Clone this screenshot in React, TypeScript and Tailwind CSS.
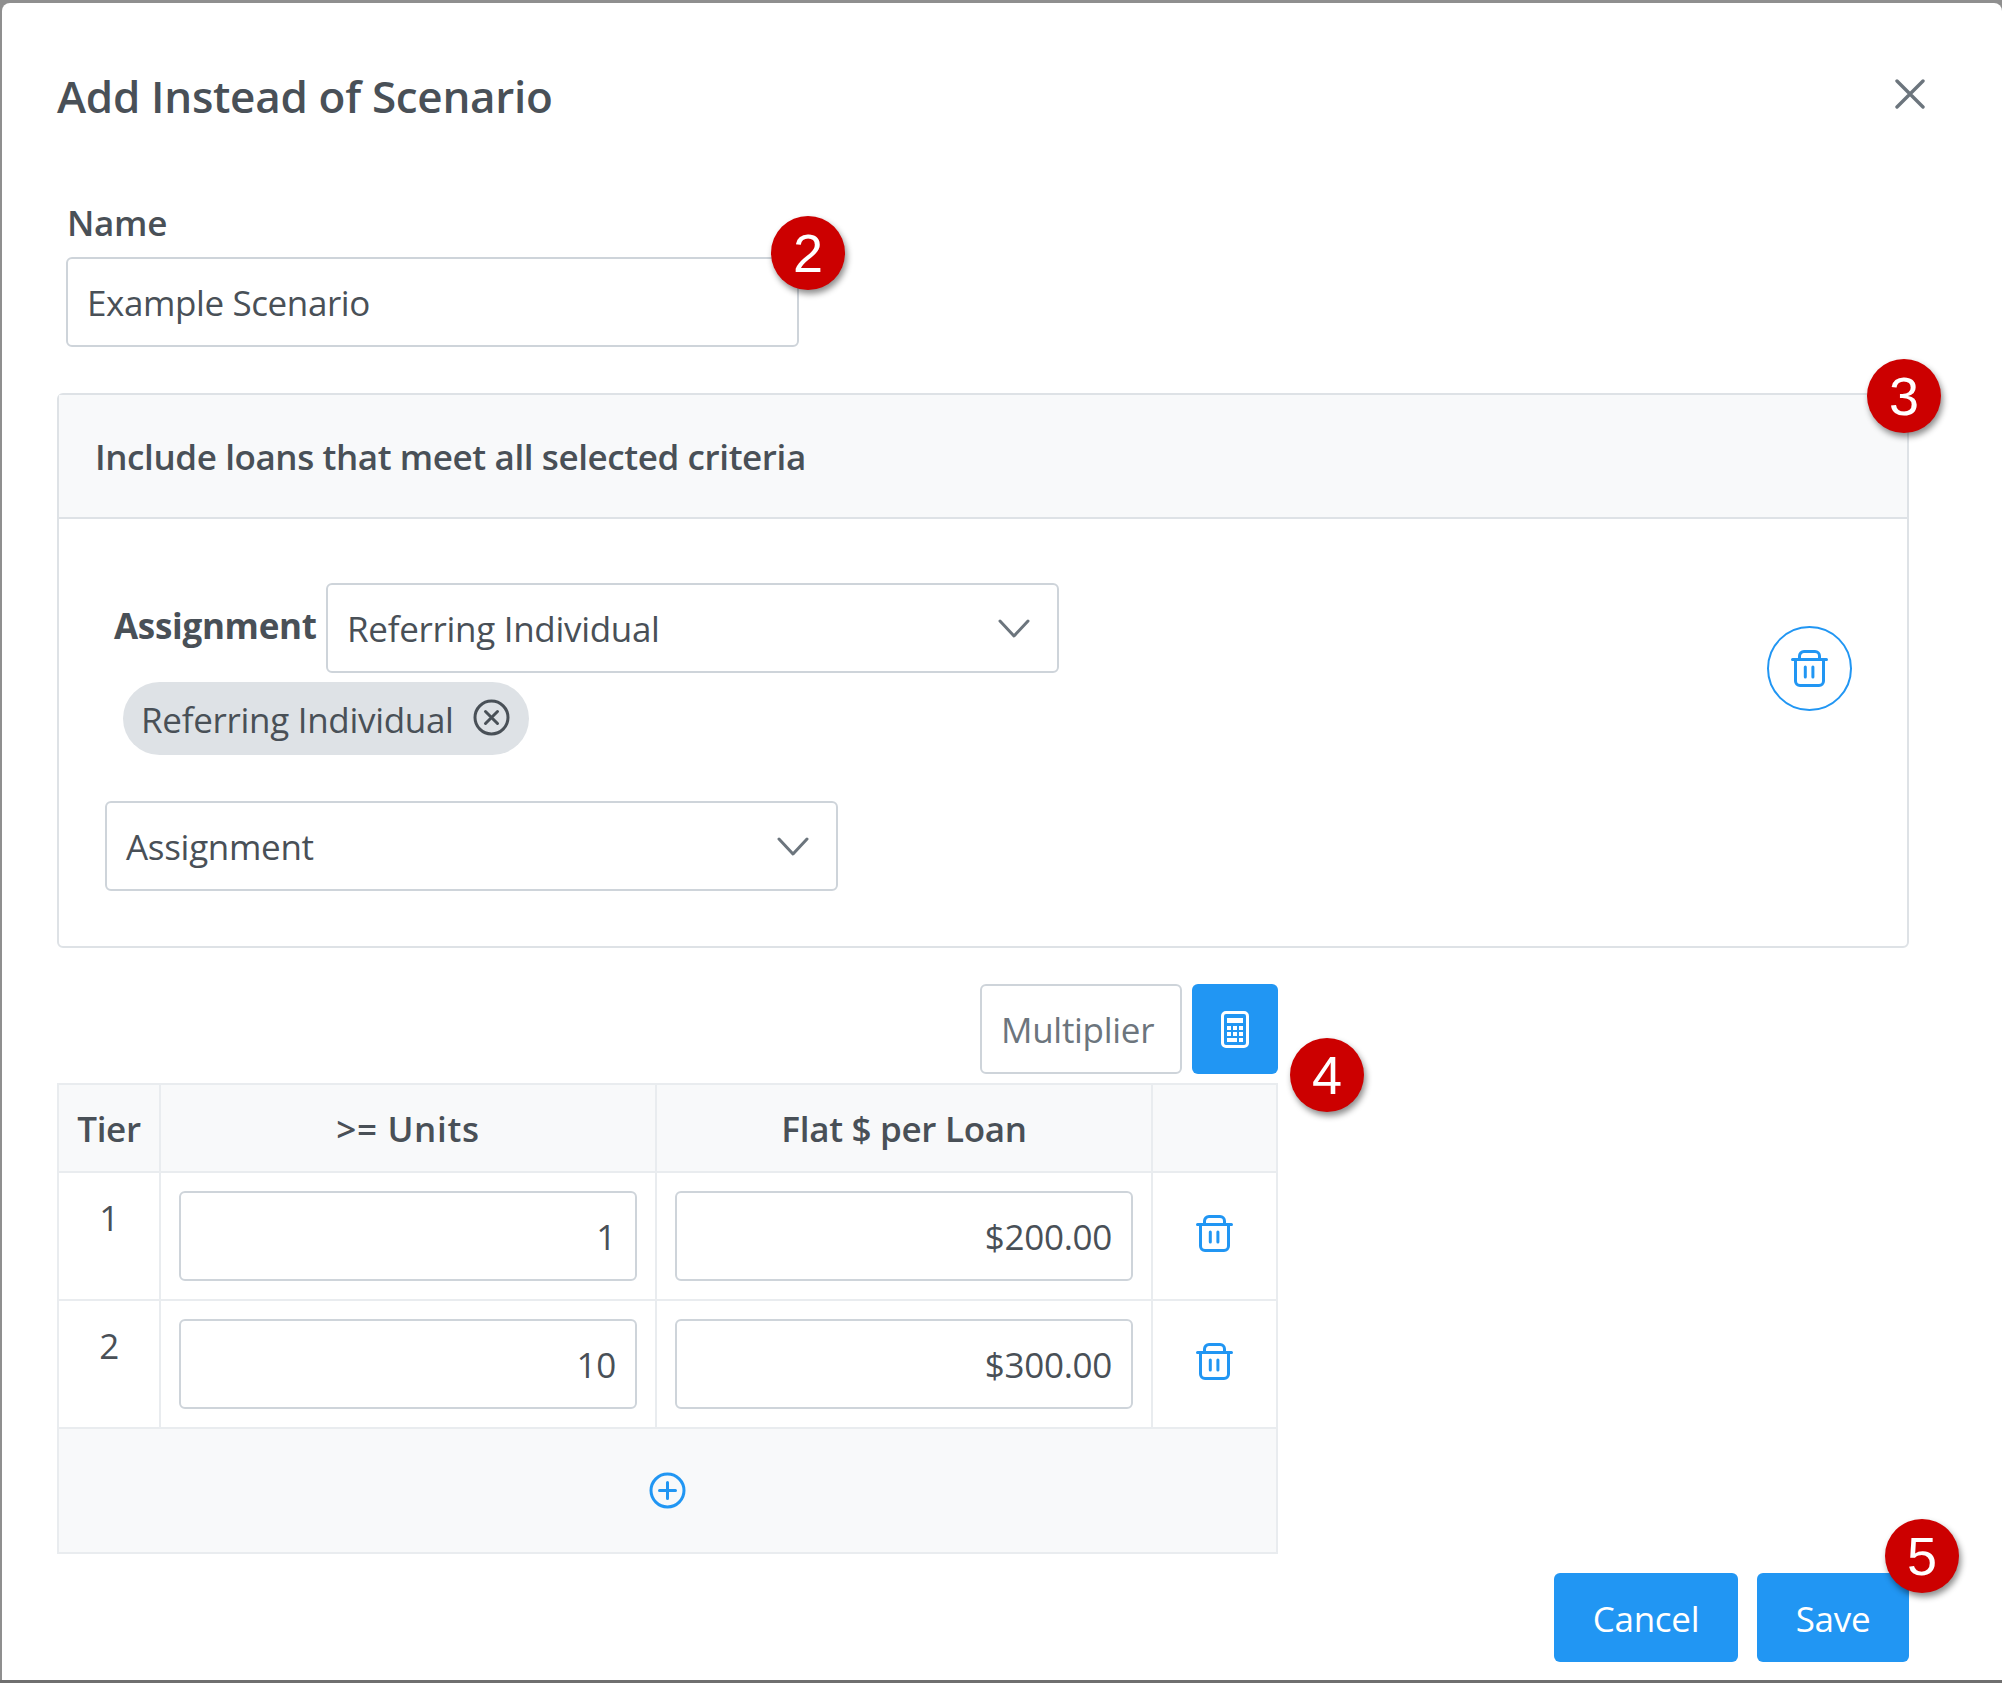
import React from 'react';

const TrashIcon = () => (
  <svg width="37" height="37" viewBox="0 0 37 37" fill="none" stroke="#2196f3" strokeWidth="3" strokeLinecap="round">
    <path d="M1.5 9.5H35.5" />
    <path d="M8.5 9.5V6a4.5 4.5 0 0 1 4.5-4.5h11a4.5 4.5 0 0 1 4.5 4.5V9.5" />
    <path d="M4.5 9.5V31a4.5 4.5 0 0 0 4.5 4.5h19a4.5 4.5 0 0 0 4.5-4.5V9.5" />
    <path d="M14.3 17V27M21.9 17V27" />
  </svg>
);

const Chevron = () => (
  <svg width="32" height="19" viewBox="0 0 32 19" fill="none" stroke="#6c757d" strokeWidth="3" strokeLinecap="round" strokeLinejoin="round">
    <path d="M2 2L16 17L30 2" />
  </svg>
);

const CalcIcon = () => (
  <svg width="28" height="37" viewBox="0 0 28 37" fill="none">
    <rect x="1.5" y="1.5" width="25" height="34" rx="3.5" stroke="#fff" strokeWidth="3" />
    <rect x="6" y="7" width="16" height="5" fill="#fff" />
    <rect x="6" y="15" width="4" height="4" fill="#fff" />
    <rect x="12" y="15" width="4" height="4" fill="#fff" />
    <rect x="18" y="15" width="4" height="4" fill="#fff" />
    <rect x="6" y="21" width="4" height="4" fill="#fff" />
    <rect x="12" y="21" width="4" height="4" fill="#fff" />
    <rect x="18" y="21" width="4" height="4" fill="#fff" />
    <rect x="6" y="27" width="10" height="4" fill="#fff" />
    <rect x="18" y="27" width="4" height="4" fill="#fff" />
  </svg>
);

const Select = ({ label }: { label: string }) => (
  <div className="flex h-[90px] w-[733px] items-center justify-between rounded-md border-2 border-[#ced4da] bg-white pl-[19px] pr-[27px]">
    <span className="mt-[3px]">{label}</span>
    <Chevron />
  </div>
);

const Field = ({ value }: { value: string }) => (
  <div className="mx-auto flex h-[90px] w-[458px] items-center justify-end rounded-md border-2 border-[#ced4da] bg-white pr-[19px]">
    <span className="mt-[2px]">{value}</span>
  </div>
);

const Badge = ({ n, className }: { n: number; className: string }) => (
  <div
    className={`absolute flex h-[74px] w-[74px] items-center justify-center rounded-full bg-[#cc0000] font-['Liberation_Sans',sans-serif] text-[54px] leading-none tracking-normal text-white shadow-[2px_4px_6px_rgba(0,0,0,0.45)] ${className}`}
  >
    {n}
  </div>
);

const tiers = [
  { tier: '1', units: '1', flat: '$200.00' },
  { tier: '2', units: '10', flat: '$300.00' },
];

export default function App() {
  return (
    <div className="relative h-[1683px] w-[2002px] overflow-hidden bg-[#8f8f8f] font-['Open_Sans',sans-serif] text-[35px] tracking-[-0.3px] text-[#495057]">
      <div className="flex h-[3px] gap-[110px] overflow-hidden text-[#444]">
        <span className="-mt-[44px] ml-[-8px] h-[47px]">mma</span>
        <span className="-mt-[44px] h-[47px]">Dashboard</span>
      </div>

      <div className="ml-[2px] h-[1677px] rounded-t-lg bg-white">
        <div className="flex h-[186px] items-start justify-between pl-[55px] pr-[77px] pt-[63px]">
          <h1 className="text-[44px] font-semibold leading-[60px] tracking-[-0.3px]">Add Instead of Scenario</h1>
          <svg className="mt-[13px]" width="30" height="30" viewBox="0 0 30 30" fill="none" stroke="#6c757d" strokeWidth="3.4" strokeLinecap="round">
            <path d="M2 2L28 28M28 2L2 28" />
          </svg>
        </div>

        <div className="w-[1907px] pl-[55px]">
          <div className="ml-[9px] w-[733px]">
            <label className="ml-px flex h-[68px] items-center font-semibold">Name</label>
            <div className="flex h-[90px] items-center rounded-md border-2 border-[#ced4da] bg-white pl-[19px]">
              <span className="mt-[3px] tracking-[-0.4px]">Example Scenario</span>
            </div>
          </div>

          <section className="mt-[46px] w-[1852px] rounded-md border-2 border-[#dee2e6]">
            <div className="flex h-[124px] items-center border-b-2 border-[#dee2e6] bg-[#f8f9fa] pl-[36px] pt-[2px] font-semibold tracking-[-0.4px]">
              Include loans that meet all selected criteria
            </div>
            <div className="flex h-[427px] items-start justify-between">
              <div className="pt-[64px]">
                <div className="flex items-start pl-[55px]">
                  <span className="w-[212px] pt-[17px] font-bold">Assignment</span>
                  <Select label="Referring Individual" />
                </div>
                <div className="ml-[64px] mt-[9px] flex h-[73px] w-[406px] items-center rounded-full bg-[#dee2e6] pl-[18px]">
                  <span className="mt-[3px]">Referring Individual</span>
                  <svg className="ml-[19px] -mt-[3px]" width="37" height="37" viewBox="0 0 37 37" fill="none" stroke="#495057" strokeWidth="3" strokeLinecap="round">
                    <circle cx="18.5" cy="18.5" r="16.5" />
                    <path d="M12.5 12.5L24.5 24.5M24.5 12.5L12.5 24.5" />
                  </svg>
                </div>
                <div className="ml-[46px] mt-[46px]">
                  <Select label="Assignment" />
                </div>
              </div>
              <button className="mr-[55px] mt-[107px] flex h-[85px] w-[85px] items-center justify-center rounded-full border-2 border-[#2196f3] bg-white">
                <TrashIcon />
              </button>
            </div>
          </section>

          <div className="mt-[36px] flex w-[1221px] justify-end gap-[10px]">
            <div className="flex h-[90px] w-[202px] items-center rounded-md border-2 border-[#ced4da] bg-white pl-[19px] text-[#6c757d]">
              <span className="mt-[3px]">Multiplier</span>
            </div>
            <button className="flex h-[90px] w-[86px] items-center justify-center rounded-md bg-[#2196f3]">
              <CalcIcon />
            </button>
          </div>

          <table className="mt-[9px] w-[1219px] table-fixed border-collapse">
            <colgroup>
              <col className="w-[102px]" />
              <col className="w-[496px]" />
              <col className="w-[496px]" />
              <col className="w-[125px]" />
            </colgroup>
            <thead>
              <tr className="h-[88px] bg-[#f8f9fa]">
                <th className="border-2 border-[#e9ecef] pt-[2px] font-semibold">Tier</th>
                <th className="border-2 border-[#e9ecef] pt-[2px] font-semibold tracking-[0.7px]">&gt;= Units</th>
                <th className="border-2 border-[#e9ecef] pt-[2px] font-semibold">Flat $ per Loan</th>
                <th className="border-2 border-[#e9ecef]" />
              </tr>
            </thead>
            <tbody>
              {tiers.map((row) => (
                <tr key={row.tier} className="h-[128px]">
                  <td className="border-2 border-[#e9ecef] pt-[19px] text-center align-top">{row.tier}</td>
                  <td className="border-2 border-[#e9ecef] align-middle">
                    <Field value={row.units} />
                  </td>
                  <td className="border-2 border-[#e9ecef] align-middle">
                    <Field value={row.flat} />
                  </td>
                  <td className="border-2 border-[#e9ecef] align-middle">
                    <div className="flex justify-center pb-[5px]">
                      <TrashIcon />
                    </div>
                  </td>
                </tr>
              ))}
              <tr className="h-[125px] bg-[#f8f9fa]">
                <td colSpan={4} className="border-2 border-[#e9ecef] align-middle">
                  <div className="flex justify-center">
                    <svg width="37" height="37" viewBox="0 0 37 37" fill="none" stroke="#2196f3" strokeWidth="3" strokeLinecap="round">
                      <circle cx="18.5" cy="18.5" r="16.5" />
                      <path d="M18.5 10.5V26.5M10.5 18.5H26.5" />
                    </svg>
                  </div>
                </td>
              </tr>
            </tbody>
          </table>

          <div className="mt-[19px] flex justify-end gap-[19px]">
            <button className="h-[89px] w-[184px] rounded-md bg-[#2196f3] pt-[3px] text-white">Cancel</button>
            <button className="h-[89px] w-[152px] rounded-md bg-[#2196f3] pt-[3px] text-white">Save</button>
          </div>
        </div>
      </div>

      <div className="h-[3px] bg-[#6f6f6f]" />

      <Badge n={2} className="left-[771px] top-[216px]" />
      <Badge n={3} className="left-[1867px] top-[359px]" />
      <Badge n={4} className="left-[1290px] top-[1038px]" />
      <Badge n={5} className="left-[1885px] top-[1519px]" />
    </div>
  );
}
